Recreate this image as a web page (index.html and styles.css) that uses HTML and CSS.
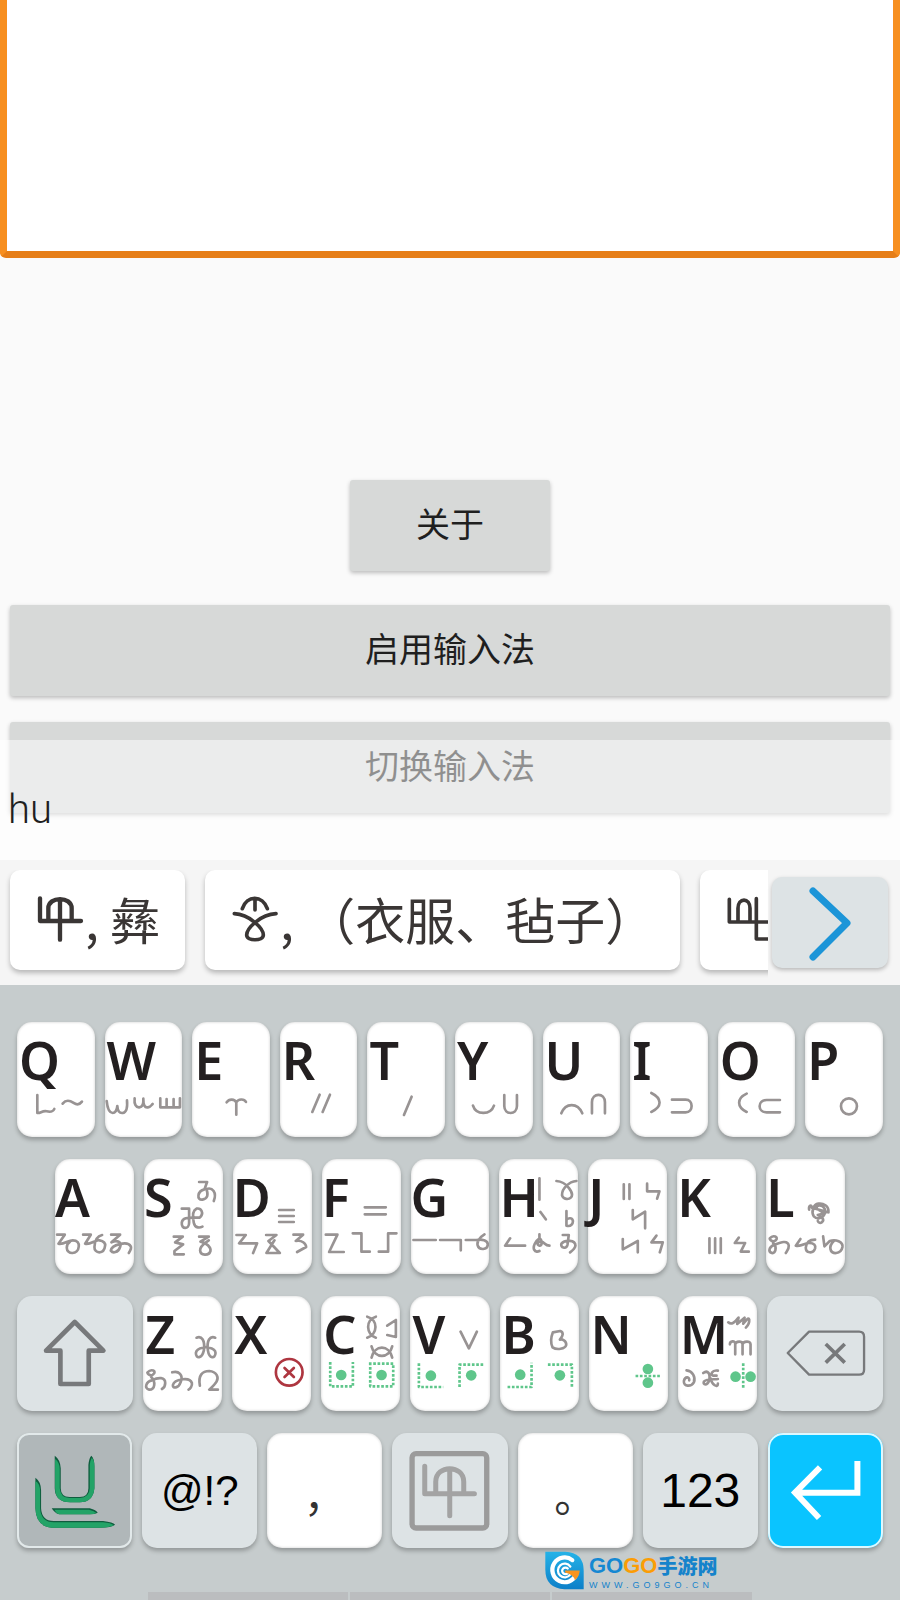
FILE: index.html
```html
<!DOCTYPE html>
<html lang="zh-CN">
<head>
  <meta charset="UTF-8" />
  <meta name="viewport" content="width=device-width, initial-scale=1" />
  <title>输入法</title>
  <link rel="stylesheet" href="styles.css">
</head>
<body>

  <main class="app">
    <textarea class="editor" aria-label="输入"></textarea>
    <button class="btn btn-about" type="button">关于</button>
    <button class="btn" type="button">启用输入法</button>
    <button class="btn" type="button">切换输入法</button>
  </main>

  <section class="ime">
    <div class="composing">hu</div>

    <div class="candidates">
      <div class="candidate-list">
        <button class="candidate" type="button">
          <svg viewBox="105 105 150 150"><path d="M120 115V183H243M145 183V145C145 108 215 108 215 145V178M180 122V239" stroke-width="13"/></svg>
          <span>, 彝</span>
        </button>
        <button class="candidate" type="button">
          <svg viewBox="690 105 150 150"><path d="M727 146C740 105 788 105 802 146M765 118V150M703 161C748 163 790 205 790 225C790 244 740 244 740 225C740 205 782 163 828 161" stroke-width="11"/></svg>
          <span>, （衣服、毡子）</span>
        </button>
        <button class="candidate" type="button" aria-label="候选">
          <svg viewBox="825 105 150 150"><path d="M838 118V186H975M864 186V145C864 112 900 112 900 145V182M919 116V237H975" stroke-width="11"/></svg>
        </button>
      </div>
      <button class="next" type="button" aria-label="更多">
        <svg viewBox="0 0 116 91"><path d="M41 14L75 46L41 80"/></svg>
      </button>
    </div>

    <div class="keyboard">
      <div class="row row-indent">
        <button class="key" type="button">Q<svg viewBox="52 33 233 345"><path d="M113 252V306C122 308 128 298 141 301C155 304 160 302 164 294M189 278C200 265 210 268 222 276C233 283 241 280 247 272"/></svg></button>
        <button class="key" type="button">W<svg viewBox="315 33 233 345"><path d="M320 270C322 290 327 306 338 306C349 306 351 295 352 285C353 300 358 307 368 306C380 304 383 290 381 268M404 262C402 280 408 290 418 289C428 288 431 276 430 263C430 282 434 291 444 289C452 288 455 282 458 279M481 262V289H540V262M500 288V264M521 288V264"/></svg></button>
        <button class="key" type="button">E<svg viewBox="578 33 233 345"><path d="M682 274C690 262 706 264 711 274C717 264 734 262 740 273M711 272V311"/></svg></button>
        <button class="key" type="button">R<svg viewBox="841 33 233 345"><path d="M960 251L938 303M991 251L969 303"/></svg></button>
        <button class="key" type="button">T<svg viewBox="1104 33 233 345"><path d="M1238 257L1215 312"/></svg></button>
        <button class="key" type="button">Y<svg viewBox="45 33 233 345"><path d="M99 284C108 313 152 313 162 284M193 252V285C193 313 231 313 231 285V252"/></svg></button>
        <button class="key" type="button">U<svg viewBox="308 33 233 345"><path d="M363 307C376 274 412 274 426 307M455 307V274C455 244 494 244 494 274V307"/></svg></button>
        <button class="key" type="button">I<svg viewBox="571 33 233 345"><path d="M635 246C668 262 668 288 635 303M697 266H738C762 266 762 304 738 304H697"/></svg></button>
        <button class="key" type="button">O<svg viewBox="834 33 233 345"><path d="M920 248C890 262 890 288 920 303M1020 267H980C952 267 952 304 980 304H1020"/></svg></button>
        <button class="key" type="button">P<svg viewBox="1096 33 233 345"><circle cx="1228" cy="286" r="24"/></svg></button>
      </div>

      <div class="row row-home">
        <button class="key" type="button">A<svg viewBox="45 24 236 345"><path d="M51 251H74L55 278C70 282 84 268 98 268C112 268 117 276 116 286C114 312 80 312 80 290C80 282 84 276 90 272M129 251H152L135 278C152 282 164 266 178 268C192 270 196 278 195 284C192 312 162 308 163 288C164 268 172 255 186 252M213 251H240L214 274C234 264 245 276 240 288C234 306 218 307 212 299C214 282 262 268 272 286C275 293 270 300 266 306"/></svg></button>
        <button class="key" type="button">S<svg viewBox="311 24 236 345"><path d="M476 93H500L492 115C470 120 468 148 486 146C502 142 504 132 498 114C516 108 530 124 520 150M424 173H446V215C446 236 422 236 424 215C426 198 442 200 478 200C492 186 482 170 468 173C456 178 456 195 460 215C464 234 480 230 486 227M400 257H427L404 274L428 280L402 300V310H430M476 257H505L480 272C500 275 512 290 510 300C505 316 480 314 479 298C478 285 495 275 505 268"/></svg></button>
        <button class="key" type="button">D<svg viewBox="576 24 236 345"><path d="M714 177H758M714 195H758M714 213H758M586 252H614L594 277H648L636 306M675 252H706L682 270L716 306H676L700 268M757 251H786L764 270C782 266 795 278 795 288L768 303"/></svg></button>
        <button class="key" type="button">F<svg viewBox="842 24 236 345"><path d="M970 169H1033M970 190H1033M853 251H888L863 303H907M934 247H960V302H985M1065 247H1040V302H1012"/></svg></button>
        <button class="key" type="button">G<svg viewBox="-92 24 236 345"><path d="M-85 267H-18M-5 267H57V298M72 267H104C120 264 138 268 138 280C138 298 112 298 108 284C104 274 114 258 128 250"/></svg></button>
        <button class="key" type="button">H<svg viewBox="175 24 236 345"><path d="M296 82V146M347 90C378 92 402 128 390 140C384 146 368 146 364 134C362 112 385 92 407 90M299 183L315 205M377 180V224C390 228 398 218 396 208C393 198 382 202 377 206M208 262L193 284H253M296 250V262C284 270 276 286 280 296C284 304 292 302 296 300M296 262C304 266 306 284 296 284C286 282 290 270 302 272C312 274 312 284 326 284M366 252H384L380 282C376 296 358 290 362 278C372 266 404 266 404 284C403 292 396 298 388 304"/></svg></button>
        <button class="key" type="button">J<svg viewBox="443 24 236 345"><path d="M550 100V144M567 100V144M620 98V121H657L650 143M577 177V205L614 182V232M547 264V295L592 270V304M648 254L633 274H667L658 304"/></svg></button>
        <button class="key" type="button">K<svg viewBox="711 24 236 345"><path d="M808 262V306M825 262V306M842 262V306M896 260L884 276H915L902 302H926"/></svg></button>
        <button class="key" type="button">L<svg viewBox="979 24 236 345"><path d="M1108 176C1106 162 1116 160 1116 170L1166 184C1168 164 1150 156 1136 158C1120 160 1114 184 1122 196C1134 208 1152 200 1156 184C1158 168 1140 156 1130 168C1128 180 1150 176 1148 188L1134 192C1146 196 1156 206 1146 214C1140 218 1136 214 1134 210M990 262C1000 250 1018 258 1008 268C998 276 988 264 990 262M1000 276C1014 290 1006 308 996 306C984 302 988 288 1002 282C1018 276 1044 264 1047 284C1048 294 1042 300 1038 306M1082 264L1068 284C1084 288 1096 276 1108 276C1124 276 1128 284 1126 292C1120 310 1098 306 1098 290C1100 272 1110 266 1126 266M1150 256L1154 286L1170 270C1188 264 1210 272 1208 288C1204 310 1174 312 1172 294C1170 284 1176 276 1182 270"/></svg></button>
      </div>

      <div class="row row-indent">
        <button class="key key-gray key-wide" type="button" aria-label="Shift"><svg viewBox="52 33 348 345"><path class="shift" d="M225 111L311 197H267V297H182V197H139Z"/></svg></button>
        <button class="key" type="button">Z<svg viewBox="430 33 236 345"><path d="M590 158C606 152 616 166 612 196C606 222 588 222 588 204C590 186 612 190 618 186C624 190 646 186 647 204C646 222 628 222 624 196C620 166 630 152 646 158M443 262C454 250 472 258 460 268C452 276 440 264 443 262M454 276C468 290 466 314 448 314C432 310 438 290 456 286C476 276 496 276 496 294C496 304 490 310 486 312M517 262C536 256 552 270 542 292C536 310 518 312 519 300C524 282 570 274 576 294C578 304 570 312 566 314M600 302C594 270 608 258 628 258C650 260 658 276 650 290C644 300 632 310 628 314H654"/></svg></button>
        <button class="key" type="button">X<svg viewBox="695 33 236 345"><g class="cancel"><circle cx="866" cy="262" r="40"/><path d="M852 249L880 276M880 249L852 276"/></g></svg></button>
        <button class="key" type="button">C<svg viewBox="960 33 236 345"><path d="M1098 95C1132 104 1130 148 1098 158M1124 95C1092 104 1094 148 1124 158M1158 122L1184 105V156L1158 150M1111 184C1120 222 1164 222 1173 184M1111 218C1120 178 1164 178 1173 218"/><g class="dots"><path d="M987 231V304H1055V231M1103 236H1176V304H1107V240"/><circle cx="1020" cy="270" r="16"/><circle cx="1141" cy="270" r="16"/></g></svg></button>
        <button class="key" type="button">V<svg viewBox="-92 33 236 345"><path d="M59 140L84 190L108 140"/><g class="dots"><path d="M-66 235V306H7M127 239H56V310"/><circle cx="-30" cy="272" r="16"/><circle cx="91" cy="271" r="16"/></g></svg></button>
        <button class="key" type="button">B<svg viewBox="175 33 236 345"><path d="M333 142C328 155 326 175 332 187C345 196 370 192 373 180C374 166 360 162 354 164C364 152 366 142 355 138Z"/><g class="dots"><path d="M197 306H269V233M318 239H390V310"/><circle cx="235" cy="269" r="16"/><circle cx="354" cy="271" r="16"/></g></svg></button>
        <button class="key" type="button">N<svg viewBox="443 33 236 345"><g class="dots"><path d="M582 273H658"/><circle cx="619" cy="252" r="16"/><circle cx="619" cy="293" r="16"/></g></svg></button>
        <button class="key" type="button">M<svg viewBox="711 33 236 345"><path d="M861 112C870 120 880 114 892 98L888 117L910 98L906 116C914 106 922 96 924 104C925 114 920 122 914 128M866 178C866 168 882 164 882 178V208M882 178C884 168 904 166 904 178V208M904 178C906 168 928 166 928 178V208M736 256C754 258 764 276 758 292C750 306 726 306 728 288C732 272 746 276 744 286M786 264C800 254 808 266 804 286C798 304 784 300 788 290C796 280 820 284 830 282M830 257C812 254 806 270 816 272H826M808 280C812 300 830 310 830 296"/><g class="dots"><path d="M906 235V312"/><circle cx="883" cy="275" r="16"/><circle cx="928" cy="275" r="16"/></g></svg></button>
        <button class="key key-gray key-wide" type="button" aria-label="Backspace"><svg viewBox="978 33 348 345"><path class="backspace" d="M1040 204L1104 140H1254Q1269 140 1269 155V254Q1269 269 1254 269H1104Z"/><path class="backspace-x" d="M1154 177L1211 233M1211 177L1154 233"/></svg></button>
      </div>

      <div class="row">
        <button class="key key-brand" type="button" aria-label="切换">
          <svg viewBox="52 24 345 345">
            <path class="brand-edge" d="M165 92Q182 104 183 130V190Q183 216 210 216H240Q266 216 266 190V120Q268 98 275 92Q284 100 284 124V190Q280 232 240 232H212Q166 232 165 190ZM107 158Q124 170 124 196V250Q126 288 162 288H310Q340 292 346 299Q336 308 300 308H156Q108 304 107 250ZM156 250H270Q290 256 294 263Q286 268 270 268H178Q164 264 156 250Z"/>
            <path class="brand-fill" d="M166 102Q180 112 180 132V190Q182 219 210 219H240Q269 218 270 190V120Q272 104 276 98Q284 104 284 124V190Q280 232 240 232H212Q166 232 166 190ZM107 168Q121 176 121 198V250Q124 292 162 292H310Q334 294 342 301Q330 308 300 308H156Q108 304 107 250ZM164 254H268Q284 258 290 264Q284 268 270 268H178Q168 264 164 254Z"/>
          </svg>
        </button>
        <button class="key key-gray key-symbol" type="button">@!?</button>
        <button class="key key-punct" type="button">，</button>
        <button class="key key-gray" type="button" aria-label="空格"><svg viewBox="-142 24 345 345"><rect class="space-frame" x="-82" y="86" width="224" height="223" rx="12"/><path class="space-glyph" d="M-44 124V206H105M-11 206V170C-11 118 73 118 73 170V200M31 135V272"/></svg></button>
        <button class="key key-punct" type="button">。</button>
        <button class="key key-gray key-number" type="button">123</button>
        <button class="key key-enter" type="button" aria-label="Enter"><svg viewBox="983 24 345 345"><path class="enter" d="M1251 108V203H1066M1139 127L1064 203L1136 279"/></svg></button>
      </div>

      <div class="nav-strip"><i></i><i></i><i></i></div>

      <a class="watermark" href="#">
        <svg viewBox="314 375 120 118">
          <defs>
            <linearGradient id="logoBlue" x1="0" y1="0" x2="0" y2="1"><stop offset="0" stop-color="#25b3e8"/><stop offset="1" stop-color="#0d7fc8"/></linearGradient>
          </defs>
          <path fill="url(#logoBlue)" d="M315 376H376Q433 378 433 434V492H374Q315 488 315 432Z"/>
          <path fill="none" stroke="#fff" stroke-width="13" d="M398 402A38 38 0 1 0 410 446"/>
          <path fill="none" stroke="#fff" stroke-width="7" d="M392 422A21 21 0 1 0 392 446M384 428A10 10 0 1 0 384 442"/>
          <path fill="#f7941d" d="M376 434H421Q420 452 406 464Q402 446 376 440Z"/>
        </svg>
        <span class="watermark-text">
          <strong><span class="blue">GO</span><span class="orange">GO</span><span class="cjk">手游网</span></strong>
          <small>WWW.GO9GO.CN</small>
        </span>
      </a>
    </div>
  </section>

</body>
</html>
```

FILE: styles.css
```css
* { box-sizing: border-box; }
body { margin: 0; background: #fafafa; font-family: Roboto, "Noto Sans CJK SC", sans-serif; color: #1f1f1f; }
button { font: inherit; color: inherit; border: none; padding: 0; cursor: pointer; }
svg { display: block; fill: none; stroke-linecap: round; stroke-linejoin: round; }

.app { display: flex; flex-direction: column; padding-bottom: 47px; }
.editor {
  display: block;
  width: 100%;
  height: 258px;
  margin-bottom: 222px;
  resize: none;
  outline: none;
  background: #fff;
  border: 7px solid #e8801a;
  border-color: #f78f20 #f78f20 #e67e18;
  border-top: none;
  border-radius: 0 0 6px 6px;
}
.btn {
  height: 91px;
  margin: 0 10px 26px;
  padding-bottom: 6px;
  background: #d7d9d8;
  border-radius: 3px;
  box-shadow: 0 2px 4px rgba(0, 0, 0, 0.25);
  font-family: "Noto Sans CJK SC", sans-serif;
  font-weight: 400;
  font-size: 34px;
  line-height: 50px;
}
.btn:last-child { margin-bottom: 0; }
.btn-about { width: 200px; margin: 0 auto 34px; }

.ime { position: relative; }
/* typed letters float over the app, right above the candidates */
.composing {
  position: absolute;
  left: 0;
  right: 0;
  bottom: 100%;
  height: 120px;
  padding: 46px 8px 0;
  background: rgba(255, 255, 255, 0.5);
  font-weight: 300;
  font-size: 40px;
  line-height: 48px;
}

.candidates { display: flex; height: 125px; padding: 10px 12px 0 0; background: #f5f5f5; }
.candidate-list { display: flex; flex: 1; gap: 20px; min-width: 0; padding-left: 10px; margin-right: 4px; overflow: hidden; }
.candidate {
  display: flex;
  flex: none;
  align-items: center;
  height: 100px;
  padding: 0 25px;
  background: #fff;
  border-radius: 10px;
  box-shadow: 0 3px 5px rgba(0, 0, 0, 0.25);
  font-family: "Noto Sans CJK SC", sans-serif;
  font-size: 50px;
  font-weight: 400;
  line-height: 72px;
  color: #3a3635;
  white-space: pre;
}
.candidate span { padding-bottom: 4px; }
.candidate svg { width: 50px; height: 50px; stroke: #3a3635; }
.next { width: 116px; height: 91px; margin-top: 7px; background: #dde3e5; border-radius: 10px; box-shadow: 0 2px 4px rgba(0, 0, 0, 0.25); }
.next svg { width: 100%; height: 100%; stroke: #1c95d8; stroke-width: 7; }

.keyboard { position: relative; display: flex; flex-direction: column; gap: 22px; padding-top: 37px; background: #c6cccd; }
.row { display: flex; gap: 10px; padding: 0 17px; }
.row-home { padding: 0 55px; }
.row-indent { text-indent: 2px; }
.key {
  position: relative;
  flex: 79 1 0;
  min-width: 0;
  height: 115px;
  padding: 8px 0 47px;
  background: #fff;
  border-radius: 15px;
  box-shadow: 0 3px 4px rgba(0, 0, 0, 0.25), inset 0 0 3px rgba(0, 0, 0, 0.2);
  font-family: "Noto Sans", sans-serif;
  font-weight: 600;
  font-size: 52px;
  line-height: 60px;
  text-align: left;
  text-indent: inherit;
  color: #231f20;
}
.key svg { position: absolute; inset: 0; width: 100%; height: 100%; stroke: #989393; stroke-width: 8; }
.key-wide { flex-grow: 116; }
.key-gray { background: #dde3e5; box-shadow: 0 3px 4px rgba(0, 0, 0, 0.25); }
.key-symbol, .key-number, .key-punct { padding: 0; text-align: center; font-family: "Liberation Sans", sans-serif; font-weight: 400; color: #000; }
.key-symbol { font-size: 42px; }
.key-number { font-size: 48px; }
.key-punct { padding-top: 6px; font-family: "Noto Sans CJK SC", sans-serif; font-size: 42px; color: #333; }
.key-brand { background: #b0b7b9; border-radius: 12px; box-shadow: 0 3px 4px rgba(0, 0, 0, 0.25), inset 0 0 0 2px #e2e9ea; }
.key-enter { background: #0ac4ff; box-shadow: 0 3px 4px rgba(0, 0, 0, 0.25), inset 0 0 0 2px #dcf8ff; }

.key .shift { stroke: #77797b; stroke-width: 14; }
.key .backspace { stroke: #77797b; stroke-width: 7; }
.key .backspace-x { stroke: #77797b; stroke-width: 11; stroke-linecap: butt; }
.key .space-frame { stroke: #9b9b9b; stroke-width: 16; }
.key .space-glyph { stroke: #a3a3a3; stroke-width: 15; }
.key .enter { stroke: #fff; stroke-width: 18; stroke-linecap: butt; stroke-linejoin: miter; }
.key .cancel { stroke: #ae3640; }
.key .brand-edge { fill: #0f5c3e; stroke: none; }
.key .brand-fill { fill: #23a367; stroke: none; }
.dots path { stroke: #5fc68b; stroke-dasharray: 8 5; stroke-linecap: butt; }
.dots circle { fill: #5fc68b; stroke: none; }

.nav-strip { display: flex; gap: 2px; height: 8px; margin: 22px 148px 0; }
.nav-strip i { flex: 1; background: #bbbdbf; }

/* site mark lies over the bottom edge of the keys */
.watermark { position: absolute; right: 183px; bottom: 10px; display: flex; gap: 5px; text-decoration: none; white-space: nowrap; }
.watermark svg { width: 39px; height: 39px; }
.watermark-text { display: flex; flex-direction: column; width: 128px; color: #1583cb; }
.watermark strong { display: flex; align-items: center; height: 29px; font: bold 22px/29px "Liberation Sans Narrow", "Liberation Sans", sans-serif; }
.watermark .blue { color: #1588d2; }
.watermark .orange { color: #fb9d05; }
.watermark .cjk { font: 900 20px/29px "Noto Sans CJK SC", sans-serif; }
.watermark small { font: 9px/10px "Liberation Sans", sans-serif; letter-spacing: 4px; }
```
